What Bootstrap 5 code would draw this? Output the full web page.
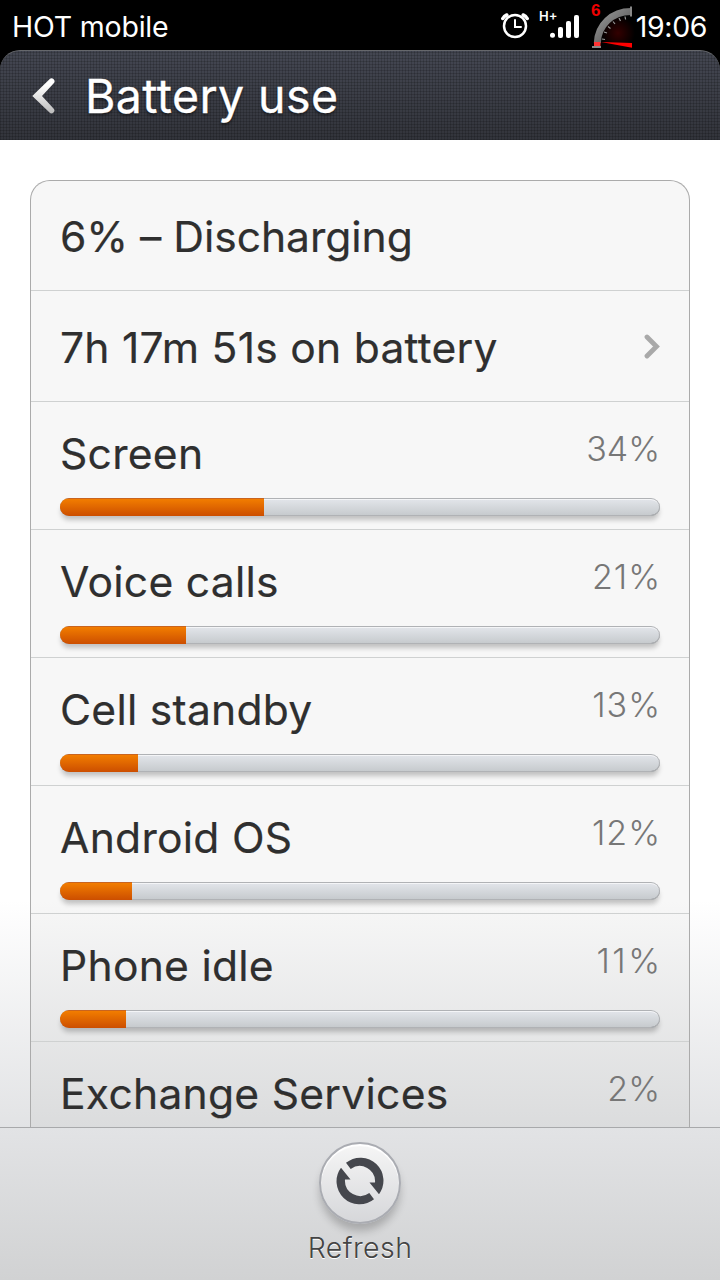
<!DOCTYPE html>
<html lang="en">
<head>
<meta charset="utf-8">
<meta name="viewport" content="width=device-width, initial-scale=1">
<title>Battery use</title>
<link href="https://cdn.jsdelivr.net/npm/bootstrap@5.3.0/dist/css/bootstrap.min.css" rel="stylesheet">
<style>
  body { font-family: Inter, "Liberation Sans", sans-serif; background: #000; color: #2f2f2f; line-height: 1; }
  .phone { width: 720px; height: 1280px; }
  .statusbar { height: 50px; padding: 0 13px 0 12px; font-size: 28.5px; background: #000; }
  .statusbar .carrier { letter-spacing: -.2px; padding-top: 4px; }
  .statusbar .clock { letter-spacing: -.4px; padding-top: 5px; }
  .titlebar {
    height: 90px; border-radius: 20px 20px 0 0; border-top: 1px solid #66686c; padding-left: 32px;
    background:
      repeating-linear-gradient(90deg, rgba(0,0,0,.16) 0 1px, transparent 1px 3px),
      repeating-linear-gradient(0deg, rgba(0,0,0,.16) 0 1px, transparent 1px 3px),
      linear-gradient(#444752, #32343b);
    text-shadow: 0 2px 3px rgba(0,0,0,.5);
  }
  .titlebar h1 { font-size: 46.5px; font-weight: 400; line-height: 1; padding-top: 1px; margin-left: 29px; letter-spacing: .4px; -webkit-text-stroke: .3px #fff; }
  .viewport { background: linear-gradient(#fff 760px, #e2e3e5); padding: 40px 30px 0; }
  .usage { border: 1px solid #ababab; border-bottom: 0; border-radius: 20px 20px 0 0; background: linear-gradient(#f7f7f7 720px, #dbdcdd); font-size: 42.6px; height: 947px; letter-spacing: .25px; -webkit-text-stroke: .2px; }
  .usage .entry { background: transparent; color: inherit; border: 0; border-bottom: 1px solid #cfd1d1; padding: 0 29px; flex-shrink: 0; line-height: 42px; }
  .summary { height: 110px; padding-top: 3px !important; }
  .summary .state { letter-spacing: -.05px; }
  .summary.linked { height: 111px; padding-top: 4px !important; }
  .summary svg { margin-bottom: 3px; }
  .consumer { height: 128px; padding-top: 31px !important; }
  .share { font-size: 34px; font-weight: 300; color: #777; line-height: 32px; letter-spacing: 0; -webkit-text-stroke: 0; }
  .share.loose { letter-spacing: 1px; margin-right: -1px; }
  .share.looser { letter-spacing: 2.5px; margin-right: -2.5px; }
  .meter {
    height: 18px; border-radius: 9px; margin-top: 23px; overflow: hidden;
    background: linear-gradient(#e4e7ec, #c5c9cc);
    box-shadow: inset 0 0 0 1px #b0b2b5, inset 0 -1px 0 #8d9093, inset 0 2px 0 #f4f5f7, 0 5px 5px -1px rgba(0,0,0,.22);
  }
  .meter .progress-bar { background: linear-gradient(#f27d00, #cc4e00); border-top: 1px solid #c9641f; }
  .toolbar { height: 153px; border-top: 1px solid #a8a9ab; background: linear-gradient(#e2e3e5, #d1d2d3); padding-top: 14px; }
  .round-btn {
    width: 82px; height: 82px; border-radius: 50%; border: 2px solid #aaacb2; background: linear-gradient(#f6f6f6, #d6d7da);
    box-shadow: 0 8px 9px -1px rgba(0,0,0,.22), inset 0 2px 1px #fff;
  }
  .round-btn svg { margin-bottom: 4px; }
  .caption { font-size: 28.5px; font-weight: 300; color: #444; margin-top: 10px; letter-spacing: .4px; text-shadow: 0 1px 0 #fff; }
</style>
</head>
<body>
<div class="phone d-flex flex-column overflow-hidden">
  <div class="statusbar d-flex align-items-center justify-content-between text-white flex-shrink-0">
    <span class="carrier">HOT mobile</span>
    <div class="d-flex align-items-center h-100">
      <svg width="136" height="50" viewBox="0 0 136 50">
        <defs>
          <linearGradient id="rim" x1="0" y1="0" x2="1" y2="1"><stop offset="0" stop-color="#999"/><stop offset="1" stop-color="#444"/></linearGradient>
          <radialGradient id="glow"><stop offset="0" stop-color="#300"/><stop offset="1" stop-color="#000"/></radialGradient>
        </defs>
        <g fill="none" stroke="#fff" stroke-width="2.500" stroke-linecap="round">
          <circle cx="15" cy="26" r="11"/>
          <path d="M15 20v7h6" stroke-width="2"/>
          <path d="M2.800 18.500a8 8 0 0 1 4-3.500M27.200 18.500a8 8 0 0 0-4-3.500" stroke-width="3.500"/>
        </g>
        <text x="39" y="20.500" font-size="13" font-weight="600" fill="#fff">H+</text>
        <g fill="#fff">
          <circle cx="52.500" cy="35.300" r="2.500"/>
          <rect x="58" y="27" width="5" height="11" rx="2"/>
          <rect x="66" y="21" width="5" height="17" rx="2"/>
          <rect x="74" y="15" width="5" height="23" rx="2"/>
        </g>
        <circle cx="118" cy="33" r="17" fill="url(#glow)"/>
        <path d="M97.300 43C98 25 112 11.500 131 11.500" fill="none" stroke="url(#rim)" stroke-width="7"/>
        <path d="M131 6.500v10M92 47h9" stroke="#888" stroke-width="2"/>
        <path d="M102 39l3 .5M104 32l3 1M108 26.500l2.500 2M113 21.500l2 2.500M119 18l1.500 3M125 16.500l.6 3" stroke="#999" stroke-width="1.200"/>
        <path d="M94 42h6.500v4h-6.500z" fill="#f33"/>
        <path d="M101 42l31 1v4.700z" fill="#f00"/>
        <text x="91" y="15.800" font-size="17" font-weight="700" fill="#f00000" font-family="Liberation Sans, sans-serif">6</text>
      </svg>
      <span class="clock">19:06</span>
    </div>
  </div>

  <header class="titlebar d-flex align-items-center text-white flex-shrink-0">
    <svg width="24" height="36" viewBox="0 0 24 36">
      <defs><linearGradient id="chev" x1="0" y1="0" x2="0" y2="1"><stop offset=".2" stop-color="#fff"/><stop offset="1" stop-color="#bbb"/></linearGradient></defs>
      <path d="M17.500 1.200a2.600 2.600 0 0 1 4 4.300L10 18l11.500 12.500a2.600 2.600 0 0 1-4 4L.3 18z" fill="url(#chev)"/>
    </svg>
    <h1 class="mb-0">Battery use</h1>
  </header>

  <main class="viewport flex-grow-1 overflow-hidden">
    <div class="usage list-group overflow-hidden">
      <div class="entry summary list-group-item d-flex align-items-center"><span class="state">6% – Discharging</span></div>
      <div class="entry summary linked list-group-item d-flex align-items-center justify-content-between">
        <span>7h 17m 51s on battery</span>
        <svg width="16" height="25" viewBox="0 0 16 25"><path d="M3 3l9.500 9.500L3 22" fill="none" stroke="#a9a9a9" stroke-width="4.800" stroke-linecap="round"/></svg>
      </div>
      <div class="entry consumer list-group-item"><div class="d-flex justify-content-between"><span>Screen</span><span class="share">34%</span></div><div class="meter progress"><div class="progress-bar" style="width:34%"></div></div></div>
      <div class="entry consumer list-group-item"><div class="d-flex justify-content-between"><span>Voice calls</span><span class="share loose">21%</span></div><div class="meter progress"><div class="progress-bar" style="width:21%"></div></div></div>
      <div class="entry consumer list-group-item"><div class="d-flex justify-content-between"><span>Cell standby</span><span class="share loose">13%</span></div><div class="meter progress"><div class="progress-bar" style="width:13%"></div></div></div>
      <div class="entry consumer list-group-item"><div class="d-flex justify-content-between"><span>Android OS</span><span class="share loose">12%</span></div><div class="meter progress"><div class="progress-bar" style="width:12%"></div></div></div>
      <div class="entry consumer list-group-item"><div class="d-flex justify-content-between"><span>Phone idle</span><span class="share looser">11%</span></div><div class="meter progress"><div class="progress-bar" style="width:11%"></div></div></div>
      <div class="entry consumer list-group-item border-bottom-0"><div class="d-flex justify-content-between"><span>Exchange Services</span><span class="share">2%</span></div></div>
    </div>
  </main>

  <footer class="toolbar d-flex flex-column align-items-center flex-shrink-0">
    <button class="round-btn p-0 d-flex align-items-center justify-content-center" aria-label="Refresh">
      <svg width="48" height="48" viewBox="-24 -24 48 48" fill="#45474d">
        <path d="M-14-18.200A23 23 0 0 1 19 13.300L9.500 1.500H15A15.300 15.300 0 0 0-9.300-12z"/>
        <path d="M14 18.200A23 23 0 0 1-19-13.300L-9.500-1.500H-15A15.300 15.300 0 0 0 9.300 12z"/>
      </svg>
    </button>
    <div class="caption">Refresh</div>
  </footer>
</div>
<script src="https://cdn.jsdelivr.net/npm/bootstrap@5.3.0/dist/js/bootstrap.bundle.min.js"></script>
</body>
</html>
